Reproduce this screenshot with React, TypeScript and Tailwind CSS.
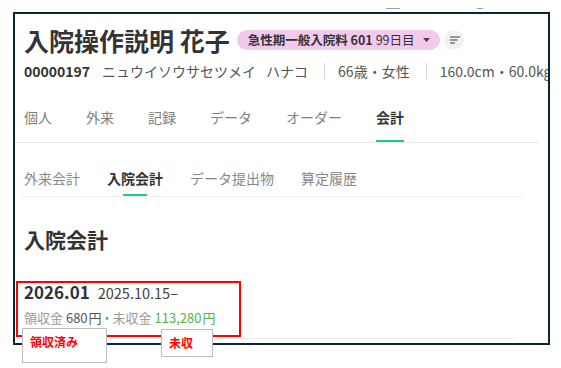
import React from 'react';

const mainTabs = ['個人', '外来', '記録', 'データ', 'オーダー', '会計'];
const subTabs = ['外来会計', '入院会計', 'データ提出物', '算定履歴'];

function SortIcon() {
    return (
        <svg width="20" height="20" viewBox="0 0 20 20">
            <circle cx="10" cy="10" r="10" fill="#f2f2f2" />
            <path d="M6.5 7h9M6.5 10h6.5M6.5 13h4" stroke="#777" strokeWidth="1.3" strokeLinecap="round" />
        </svg>
    );
}

export default function App() {
    return (
        <div className="relative w-[561px] h-[368px] pt-[12px] pl-[13px] bg-white font-['Noto_Sans_CJK_JP','Noto_Sans',sans-serif] text-[#333]">
            {/* 枠の上の切れ端 */}
            <div className="absolute left-[386px] top-[8px] w-[14px] h-px bg-[#a0a0a0]" />
            <div className="absolute left-[477px] top-[8px] w-[6px] h-px bg-[#a0a0a0]" />

            <div className="w-[537px] h-[333px] border-2 border-[#0b2532] overflow-hidden">
                {/* 患者ヘッダー */}
                <div className="pl-[9px] pt-[10px]">
                    <div className="flex items-center h-8 whitespace-nowrap">
                        <h1 className="shrink-0 text-[25px] font-bold leading-8">入院操作説明 花子</h1>
                        <div className="shrink-0 ml-[7px] flex items-center h-5 pl-[11px] pr-[10px] rounded-full bg-[#f4c9ee] text-[12.5px] leading-5">
                            <span className="font-bold">急性期一般入院料 601</span>
                            <span className="ml-[3px]">99日目</span>
                            <svg width="7" height="4" viewBox="0 0 7 4" className="ml-2">
                                <path d="M0 0h7L3.5 4z" fill="#444" />
                            </svg>
                        </div>
                        <div className="shrink-0 ml-[4px]">
                            <SortIcon />
                        </div>
                    </div>
                    <div className="mt-[5px] flex items-center h-5 whitespace-nowrap text-[14px] leading-5 text-[#555]">
                        <span className="shrink-0 font-bold text-[#333]">00000197</span>
                        <span className="shrink-0 ml-3">ニュウイソウサセツメイ</span>
                        <span className="shrink-0 ml-[10px]">ハナコ</span>
                        <span className="shrink-0 ml-4 mr-[13px] w-px h-4 bg-[#d6d6d6]" />
                        <span className="shrink-0">66歳・女性</span>
                        <span className="shrink-0 ml-4 mr-[13px] w-px h-4 bg-[#d6d6d6]" />
                        <span className="shrink-0">160.0cm・60.0kg</span>
                    </div>
                </div>

                {/* メインタブ */}
                <div className="mt-[26px] mr-[9px] pl-[9px] flex gap-[34px] border-b border-[#e8e8e8] text-[14px] leading-5">
                    {mainTabs.map((t) => (
                        <div
                            key={t}
                            className={
                                t === '会計'
                                    ? 'pb-[13px] border-b-2 border-[#22c38e] font-bold text-[#333]'
                                    : 'pb-[13px] border-b-2 border-transparent text-[#808080]'
                            }
                        >
                            {t}
                        </div>
                    ))}
                </div>

                {/* サブタブ */}
                <div className="mt-[25px] ml-[7px] mr-[26px] pl-[2px] flex gap-[27px] border-b border-[#efefef] text-[14px] leading-5">
                    {subTabs.map((t) => (
                        <div key={t} className="flex flex-col">
                            <span className={t === '入院会計' ? 'font-bold text-[#333]' : 'text-[#888]'}>{t}</span>
                            <span className={t === '入院会計' ? 'mt-[6px] mx-auto w-6 h-[2px] bg-[#22c38e]' : 'mt-[6px] h-[2px]'} />
                        </div>
                    ))}
                </div>

                <h2 className="mt-[28px] pl-[9px] text-[21px] font-bold leading-7">入院会計</h2>

                {/* 請求月 */}
                <div className="mt-[27px] ml-[7px] mr-[31px] pl-[2px] pb-[10px] border-b border-[#efefef]">
                    <div className="flex items-baseline leading-6 whitespace-nowrap">
                        <span className="text-[17px] font-bold text-[#333]">2026.01</span>
                        <span className="ml-2 text-[14.5px] text-[#444]">2025.10.15–</span>
                    </div>
                    <div className="mt-[3px] text-[13px] leading-5 whitespace-nowrap">
                        <span className="text-[#9a9a9a]">領収金 </span>
                        <span className="text-[#555]">680</span>
                        <span className="ml-px text-[#555]">円</span>
                        <span className="-mx-px text-[#888]">・</span>
                        <span className="text-[#9a9a9a]">未収金 </span>
                        <span className="text-[#5ab14a]">113,280</span>
                        <span className="ml-px text-[#5ab14a]">円</span>
                    </div>
                </div>
            </div>

            {/* 注記 */}
            <div className="absolute left-[16px] top-[281px] w-[225px] h-[56px] border-2 border-[#ff0000]" />
            <div className="absolute left-[22px] top-[328px] w-[85px] h-[35px] border border-[#bdbdbd] bg-white pl-[7px] pt-[5px] text-[12px] leading-4 font-bold text-[#ff0000]">
                領収済み
            </div>
            <div className="absolute left-[161px] top-[329px] w-[52px] h-[28px] border border-[#bdbdbd] bg-white pl-[7px] pt-[5px] text-[12px] leading-4 font-bold text-[#ff0000]">
                未収
            </div>
        </div>
    );
}
